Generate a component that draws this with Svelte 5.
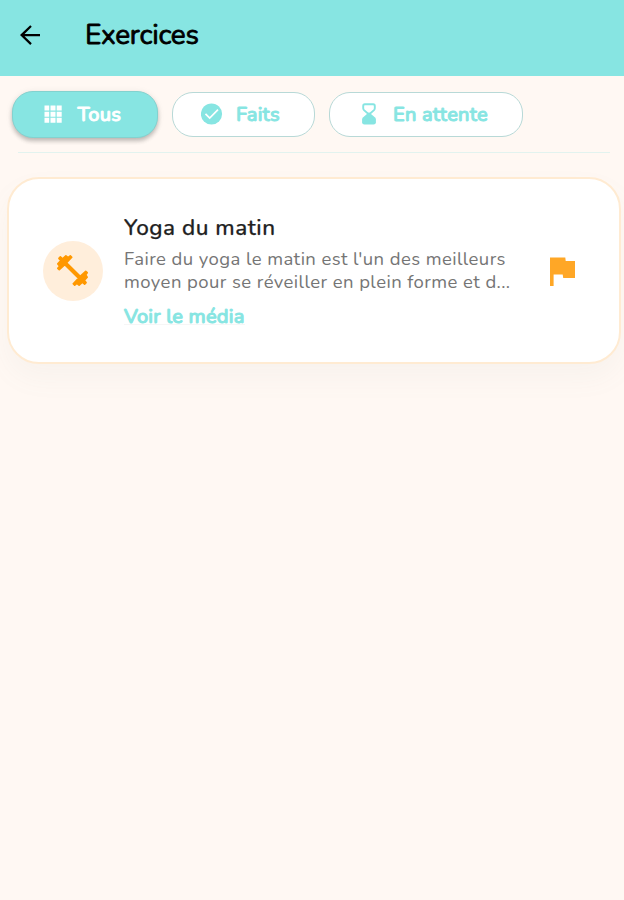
<script>
  const filters = [
    { id: 'all', label: 'Tous' },
    { id: 'done', label: 'Faits' },
    { id: 'wait', label: 'En attente' }
  ];
  let active = $state('all');
</script>

<main>
  <header>
    <button class="back" aria-label="Retour">
      <svg width="30" height="30" viewBox="0 0 24 24"><path fill="#000" d="M20 11.100H7.630l5.790-5.690L12.200 4.100l-8.200 7.900 8.200 7.900 1.220-1.310L7.630 12.900H20z" /></svg>
    </button>
    <h1>Exercices</h1>
  </header>

  <nav>
    {#each filters as f}
      <button class="chip {f.id}" class:active={active === f.id} onclick={() => (active = f.id)}>
        {#if f.id === 'all'}
          <svg width="18" height="18" viewBox="0 0 18 18"><path fill="currentColor" d="M.5 .5h4.700v5H.5zM6.500 .5h5v5h-5zM12.700 .5h5v5h-5zM.5 6.700h4.700v5H.5zM6.500 6.700h5v5h-5zM12.700 6.700h5v5h-5zM.5 12.800h4.700v5H.5zM6.500 12.800h5v5h-5zM12.700 12.800h5v5h-5z" /></svg>
        {:else if f.id === 'done'}
          <svg width="22" height="22" viewBox="0 0 22 22"><circle cx="10.500" cy="11" r="10.600" fill="currentColor" /><path d="M4.500 10.800 8.700 15 17 6.700" fill="none" stroke="#fff" stroke-width="1.700" /></svg>
        {:else}
          <svg width="14" height="22" viewBox="0 0 14 22"><path d="M2.800 1.300h8.400q1.600 0 1.600 1.600v2.400q0 1-.8 1.800L7 11.500 2 7.100q-.8-.8-.8-1.800V2.900q0-1.600 1.600-1.600z" fill="none" stroke="currentColor" stroke-width="1.900" /><path d="M7 9.300 12.800 14.300q1.100 1 1.100 2.200v2.700q0 2.300-2.300 2.300H2.400Q.1 21.500.1 19.200v-2.700q0-1.200 1.100-2.200z" fill="currentColor" /></svg>
        {/if}
        <span>{f.label}</span>
      </button>
    {/each}
  </nav>
  <hr />

  <article>
    <div class="avatar">
      <svg width="37" height="37" viewBox="0 0 24 24"><path fill="#ff9800" stroke="#ff9800" stroke-width="1.100" stroke-linejoin="round" d="M20.570 14.860 21.500 13.430 20.570 12.500 17 15.870 8.130 7 11.500 3.430 10.570 2.500 9.140 3.730 7.710 2.500 5.570 4.440 4.140 3.210 3.210 4.140 4.440 5.570 2.500 7.710 3.730 9.140 2.500 10.570 3.430 11.500 7 8.130 15.870 17 12.500 20.570 13.430 21.500 14.860 20.270 16.290 21.500 18.430 19.560 19.860 20.790 20.790 19.860 19.560 18.430 21.500 16.290z" /></svg>
    </div>
    <div class="body">
      <h2>Yoga du matin</h2>
      <p>Faire du yoga le matin est l'un des meilleurs moyen pour se réveiller en plein forme et d...</p>
      <a href="#media">Voir le média</a>
    </div>
    <svg class="flag" width="26" height="29" viewBox="0 0 26 29"><path fill="#ffa726" d="M0 .5h15.300l.4 3.600H25v16.800H13.200l-.5-3.400H3.600V29H0z" /></svg>
  </article>
</main>

<style>
  :global(body) { margin: 0; background: #fff8f3; }
  main {
    width: 624px; height: 900px; overflow: hidden; background: #fff8f3;
    font-family: Nunito, "Open Sans", "Noto Sans", sans-serif;
  }
  h1, h2, p { margin: 0; }
  svg { display: block; flex: none; }
  button { border: 0; font: inherit; }
  header { height: 76px; background: #87e5e2; display: flex; align-items: flex-start; box-sizing: border-box; padding: 15px 0 0 15px; }
  .back { padding: 5px 0 0; background: none; width: 70px; }
  h1 { font-size: 28px; line-height: 40px; font-weight: 400; letter-spacing: -.25px; -webkit-text-stroke: .8px; }
  nav { display: flex; align-items: center; height: 76px; box-sizing: border-box; padding-left: 12px; }
  .chip {
    display: flex; align-items: center; box-sizing: border-box; height: 45px;
    background: #fff; color: #87e5e2; border: 1px solid #b8d9d7; border-radius: 21px;
    padding: 0; white-space: nowrap; font-size: 20px; font-weight: 500; letter-spacing: .2px; -webkit-text-stroke: 1px;
  }
  .all { width: 146px; padding-left: 31px; gap: 15.500px; margin-right: 14px; }
  .done { width: 143px; padding-left: 28px; gap: 13px; margin-right: 14px; }
  .wait { width: 194px; padding-left: 32px; gap: 17px; }
  .active { height: 47px; color: #fff; background: #87e5e2; border-color: #83d2cf; box-shadow: 0 3px 4px rgba(0, 0, 0, .22), 0 1px 7px rgba(0, 0, 0, .08); }
  hr { height: 1px; border: 0; background: #e2f3ef; margin: 0 14px 24px 18px; }
  article {
    display: flex; align-items: center; box-sizing: border-box; width: 614px; height: 187px; margin-left: 7px;
    background: #fff; border: 2px solid #ffebd2; border-radius: 32px; padding-left: 33.500px;
    box-shadow: 0 14px 28px rgba(120, 150, 140, .055);
  }
  .avatar { width: 60px; height: 60px; border-radius: 50%; background: #ffeedb; display: grid; place-items: center; }
  .body { margin-left: 21.500px; width: 426px; padding-top: 2px; }
  h2 { font-size: 22.500px; line-height: 30px; height: 35px; font-weight: 500; color: #212121; letter-spacing: .5px; -webkit-text-stroke: .25px; }
  p { width: 400px; font-size: 18.500px; line-height: 23px; color: #757575; letter-spacing: .42px; }
  .flag { margin-top: 1px; }
  a {
    display: block; width: 121px; margin-top: 10.500px; font-size: 20px; line-height: 26px; font-weight: 500;
    color: #87e5e2; text-decoration: none; letter-spacing: .2px; -webkit-text-stroke: 1px; white-space: nowrap;
    background: linear-gradient(#f6f6f6, #f6f6f6) 0 20px / 100% 1px no-repeat;
  }
</style>
